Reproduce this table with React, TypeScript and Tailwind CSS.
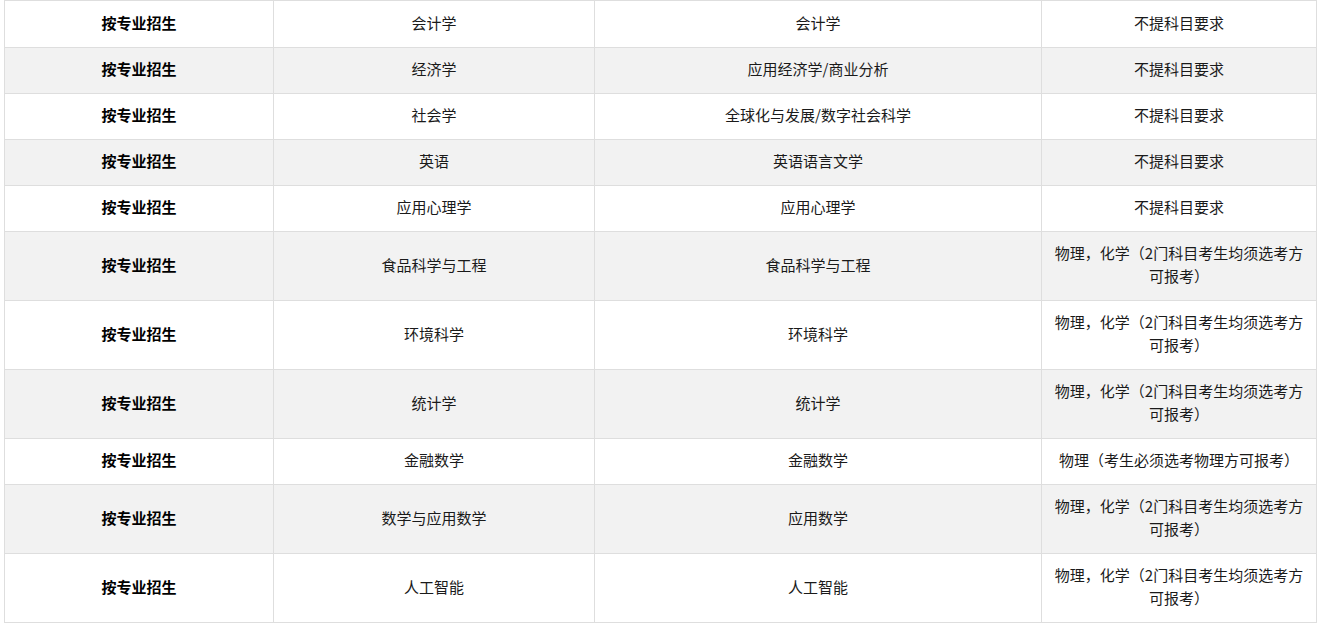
import React from 'react';

type Row = {
  major: string;
  program: string;
  req: string[];
};

const ONE = ['不提科目要求'];
const PC = ['物理，化学（2门科目考生均须选考方', '可报考）'];

const rows: Row[] = [
  { major: '会计学', program: '会计学', req: ONE },
  { major: '经济学', program: '应用经济学/商业分析', req: ONE },
  { major: '社会学', program: '全球化与发展/数字社会科学', req: ONE },
  { major: '英语', program: '英语语言文学', req: ONE },
  { major: '应用心理学', program: '应用心理学', req: ONE },
  { major: '食品科学与工程', program: '食品科学与工程', req: PC },
  { major: '环境科学', program: '环境科学', req: PC },
  { major: '统计学', program: '统计学', req: PC },
  { major: '金融数学', program: '金融数学', req: ['物理（考生必须选考物理方可报考）'] },
  { major: '数学与应用数学', program: '应用数学', req: PC },
  { major: '人工智能', program: '人工智能', req: PC },
];

export default function App() {
  return (
    <div
      className="min-h-screen bg-white px-[4px]"
      style={{ fontFamily: '"Noto Sans CJK SC", "Noto Sans", sans-serif' }}
    >
      <table className="w-[1312px] table-fixed border-collapse text-[15px] leading-[23px] text-[#1a1a1a]">
        <colgroup>
          <col className="w-[269px]" />
          <col className="w-[321px]" />
          <col className="w-[447px]" />
          <col className="w-[275px]" />
        </colgroup>
        <tbody>
          {rows.map((r, i) => {
            const pad = i === 0 ? 'px-[10px] pt-[10px] pb-[13px]' : 'px-[10px] pt-[9px] pb-[13px]';
            return (
              <tr key={i} className={i % 2 === 1 ? 'bg-[#f2f2f2]' : 'bg-white'}>
                <td className={`border border-[#dedede] ${pad} text-center font-bold text-black`}>
                  按专业招生
                </td>
                <td className={`border border-[#dedede] ${pad} text-center`}>{r.major}</td>
                <td className={`border border-[#dedede] ${pad} text-center`}>{r.program}</td>
                <td className={`border border-[#dedede] ${pad} text-center`}>
                  {r.req.map((line, j) => (
                    <div key={j} className="whitespace-nowrap">
                      {line}
                    </div>
                  ))}
                </td>
              </tr>
            );
          })}
        </tbody>
      </table>
    </div>
  );
}
